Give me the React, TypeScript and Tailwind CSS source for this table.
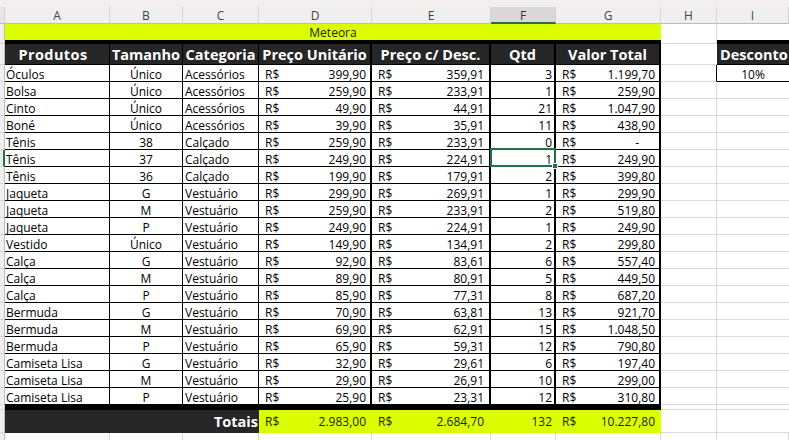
import React from "react";

type Produto = {
  produto: string;
  tamanho: string;
  categoria: string;
  preco: string;
  desc: string;
  qtd: string;
  total: string;
};

const produtos: Produto[] = [
  { produto: "Óculos", tamanho: "Único", categoria: "Acessórios", preco: "399,90", desc: "359,91", qtd: "3", total: "1.199,70" },
  { produto: "Bolsa", tamanho: "Único", categoria: "Acessórios", preco: "259,90", desc: "233,91", qtd: "1", total: "259,90" },
  { produto: "Cinto", tamanho: "Único", categoria: "Acessórios", preco: "49,90", desc: "44,91", qtd: "21", total: "1.047,90" },
  { produto: "Boné", tamanho: "Único", categoria: "Acessórios", preco: "39,90", desc: "35,91", qtd: "11", total: "438,90" },
  { produto: "Tênis", tamanho: "38", categoria: "Calçado", preco: "259,90", desc: "233,91", qtd: "0", total: "-" },
  { produto: "Tênis", tamanho: "37", categoria: "Calçado", preco: "249,90", desc: "224,91", qtd: "1", total: "249,90" },
  { produto: "Tênis", tamanho: "36", categoria: "Calçado", preco: "199,90", desc: "179,91", qtd: "2", total: "399,80" },
  { produto: "Jaqueta", tamanho: "G", categoria: "Vestuário", preco: "299,90", desc: "269,91", qtd: "1", total: "299,90" },
  { produto: "Jaqueta", tamanho: "M", categoria: "Vestuário", preco: "259,90", desc: "233,91", qtd: "2", total: "519,80" },
  { produto: "Jaqueta", tamanho: "P", categoria: "Vestuário", preco: "249,90", desc: "224,91", qtd: "1", total: "249,90" },
  { produto: "Vestido", tamanho: "Único", categoria: "Vestuário", preco: "149,90", desc: "134,91", qtd: "2", total: "299,80" },
  { produto: "Calça", tamanho: "G", categoria: "Vestuário", preco: "92,90", desc: "83,61", qtd: "6", total: "557,40" },
  { produto: "Calça", tamanho: "M", categoria: "Vestuário", preco: "89,90", desc: "80,91", qtd: "5", total: "449,50" },
  { produto: "Calça", tamanho: "P", categoria: "Vestuário", preco: "85,90", desc: "77,31", qtd: "8", total: "687,20" },
  { produto: "Bermuda", tamanho: "G", categoria: "Vestuário", preco: "70,90", desc: "63,81", qtd: "13", total: "921,70" },
  { produto: "Bermuda", tamanho: "M", categoria: "Vestuário", preco: "69,90", desc: "62,91", qtd: "15", total: "1.048,50" },
  { produto: "Bermuda", tamanho: "P", categoria: "Vestuário", preco: "65,90", desc: "59,31", qtd: "12", total: "790,80" },
  { produto: "Camiseta Lisa", tamanho: "G", categoria: "Vestuário", preco: "32,90", desc: "29,61", qtd: "6", total: "197,40" },
  { produto: "Camiseta Lisa", tamanho: "M", categoria: "Vestuário", preco: "29,90", desc: "26,91", qtd: "10", total: "299,00" },
  { produto: "Camiseta Lisa", tamanho: "P", categoria: "Vestuário", preco: "25,90", desc: "23,31", qtd: "12", total: "310,80" },
];

const colunas = [
  { letra: "A", w: "w-[105px]" },
  { letra: "B", w: "w-[73px]" },
  { letra: "C", w: "w-[76px]" },
  { letra: "D", w: "w-[113px]" },
  { letra: "E", w: "w-[119px]" },
  { letra: "F", w: "w-[65px]" },
  { letra: "G", w: "w-[105px]" },
  { letra: "H", w: "w-[56px]" },
  { letra: "I", w: "w-[72px]" },
];

// numero da linha (so aparece uma tira fina na esquerda)
const Gutter = ({ selected = false }: { selected?: boolean }) => (
  <div
    className={
      selected
        ? "h-full w-[5px] shrink-0 border-r-2 border-b border-r-[#217346] border-b-[#d4d4d4] bg-[#e9e9e9]"
        : "h-full w-[5px] shrink-0 border-r border-b border-r-[#bdbdbd] border-b-[#d4d4d4] bg-[#efefef]"
    }
  />
);

const Real = ({ value, className }: { value: string; className: string }) => (
  <div className={`flex h-full shrink-0 justify-between border-b border-black ${className}`}>
    <span>R$</span>
    <span className={value === "-" ? "pr-[16px]" : ""}>{value}</span>
  </div>
);

const App = () => {
  return (
    <div className="h-[440px] w-[789px] overflow-hidden bg-white font-['Open_Sans',sans-serif] text-[12px] text-black">
      <div className="h-[7px] bg-[#f4efef]" />

      {/* letras das colunas */}
      <div className="flex h-[17px]">
        <div className="h-full w-[5px] shrink-0 border-r border-b border-r-[#cfcfcf] border-b-[#bdbdbd] bg-[#e6e6e6]" />
        {colunas.map((c) => (
          <div
            key={c.letra}
            className={
              c.letra === "F"
                ? `${c.w} h-full shrink-0 border-r border-b-2 border-r-[#cfcfcf] border-b-[#217346] bg-[#d9d9d9] text-center leading-[17px] text-[#333]`
                : `${c.w} h-full shrink-0 border-r border-b border-r-[#d4d4d4] border-b-[#bdbdbd] bg-[#efefef] text-center leading-[17px] text-[#444]`
            }
          >
            {c.letra}
          </div>
        ))}
      </div>

      {/* titulo */}
      <div className="flex h-[20px]">
        <Gutter />
        <div className="h-full w-[656px] shrink-0 border-b-4 border-black bg-[#dbff00] text-center leading-[18px] text-[#222]">
          Meteora
        </div>
        <div className="h-full w-[56px] shrink-0 border-r border-b border-[#d9d9d9]" />
        <div className="h-full w-[72px] shrink-0 border-b-4 border-black" />
      </div>

      {/* cabecalho */}
      <div className="flex h-[21px] text-[14.5px] font-bold leading-[22px] text-white">
        <Gutter />
        <div className="h-full w-[105px] shrink-0 border-r border-b border-black bg-[#262626] pr-[8px] text-center tracking-[0.4px]">Produtos</div>
        <div className="h-full w-[73px] shrink-0 border-r border-b border-black bg-[#262626] text-center">Tamanho</div>
        <div className="h-full w-[76px] shrink-0 border-r border-b border-black bg-[#262626] text-center">Categoria</div>
        <div className="h-full w-[113px] shrink-0 border-r-2 border-b border-black bg-[#262626] text-center">Preço Unitário</div>
        <div className="h-full w-[119px] shrink-0 border-r-2 border-b border-black bg-[#262626] text-center">Preço c/ Desc.</div>
        <div className="h-full w-[65px] shrink-0 border-r-2 border-b border-black bg-[#262626] text-center">Qtd</div>
        <div className="h-full w-[105px] shrink-0 border-r-2 border-b border-black bg-[#262626] text-center">Valor Total</div>
        <div className="h-full w-[56px] shrink-0 border-b border-[#d9d9d9]" />
        <div className="h-full w-[72px] shrink-0 border-b border-black bg-[#262626] pl-[3px] whitespace-nowrap">Desconto</div>
      </div>

      {produtos.map((p, i) => (
        <div key={i} className="flex h-[17px] leading-[19px]">
          <Gutter selected={i === 5} />
          <div className="h-full w-[105px] shrink-0 border-r border-b border-black pl-[1px] whitespace-nowrap">{p.produto}</div>
          <div className="h-full w-[73px] shrink-0 border-r border-b border-black text-center">{p.tamanho}</div>
          <div className="h-full w-[76px] shrink-0 border-r border-b border-black pl-[2px] whitespace-nowrap">{p.categoria}</div>
          <Real value={p.preco} className="w-[113px] border-r-2 pr-[4px] pl-[6px]" />
          <Real value={p.desc} className="w-[119px] border-r-2 pr-[5px] pl-[6px]" />
          <div className="relative h-full w-[65px] shrink-0 border-r-2 border-b border-black pr-[2px] text-right">
            {p.qtd}
            {i === 5 && (
              <div className="absolute -top-[2px] -right-[2px] -bottom-[1px] -left-[1px] z-10 border-2 border-[#217346]">
                <div className="absolute -right-[4px] -bottom-[4px] h-[6px] w-[6px] border border-white bg-[#217346]" />
              </div>
            )}
          </div>
          <Real value={p.total} className="w-[105px] border-r-2 pr-[4px] pl-[6px]" />
          <div
            className={
              i === 0
                ? "h-full w-[56px] shrink-0 border-r border-b border-r-black border-b-[#d9d9d9]"
                : "h-full w-[56px] shrink-0 border-r border-b border-[#d9d9d9]"
            }
          />
          <div
            className={
              i === 0
                ? "h-full w-[72px] shrink-0 border-b border-black text-center"
                : "h-full w-[72px] shrink-0 border-b border-[#d9d9d9]"
            }
          >
            {i === 0 ? "10%" : ""}
          </div>
        </div>
      ))}

      {/* faixa preta antes dos totais */}
      <div className="flex h-[5px]">
        <Gutter />
        <div className="h-full w-[656px] shrink-0 bg-black" />
        <div className="h-full w-[56px] shrink-0 border-r border-b border-[#d9d9d9]" />
        <div className="h-full w-[72px] shrink-0 border-b border-[#d9d9d9]" />
      </div>

      {/* totais */}
      <div className="flex h-[23px] leading-[24px]">
        <Gutter />
        <div className="h-full w-[254px] shrink-0 bg-[#262626] pr-[1px] text-right text-[14.5px] font-bold text-white">Totais</div>
        <div className="flex h-full w-[113px] shrink-0 justify-between bg-[#dbff00] pr-[6px] pl-[6px] text-[#222]">
          <span>R$</span>
          <span>2.983,00</span>
        </div>
        <div className="flex h-full w-[119px] shrink-0 justify-between bg-[#dbff00] pr-[7px] pl-[6px] text-[#222]">
          <span>R$</span>
          <span>2.684,70</span>
        </div>
        <div className="h-full w-[65px] shrink-0 bg-[#dbff00] pr-[4px] text-right text-[#222]">132</div>
        <div className="flex h-full w-[105px] shrink-0 justify-between bg-[#dbff00] pr-[6px] pl-[6px] text-[#222]">
          <span>R$</span>
          <span>10.227,80</span>
        </div>
        <div className="h-full w-[56px] shrink-0 border-r border-b border-[#d9d9d9]" />
        <div className="h-full w-[72px] shrink-0 border-b border-[#d9d9d9]" />
      </div>

      {/* linha vazia embaixo */}
      <div className="flex h-[17px]">
        <Gutter />
        {colunas.map((c) => (
          <div key={c.letra} className={`${c.w} h-full shrink-0 border-r border-b border-[#d9d9d9]`} />
        ))}
      </div>
    </div>
  );
};

export default App;
